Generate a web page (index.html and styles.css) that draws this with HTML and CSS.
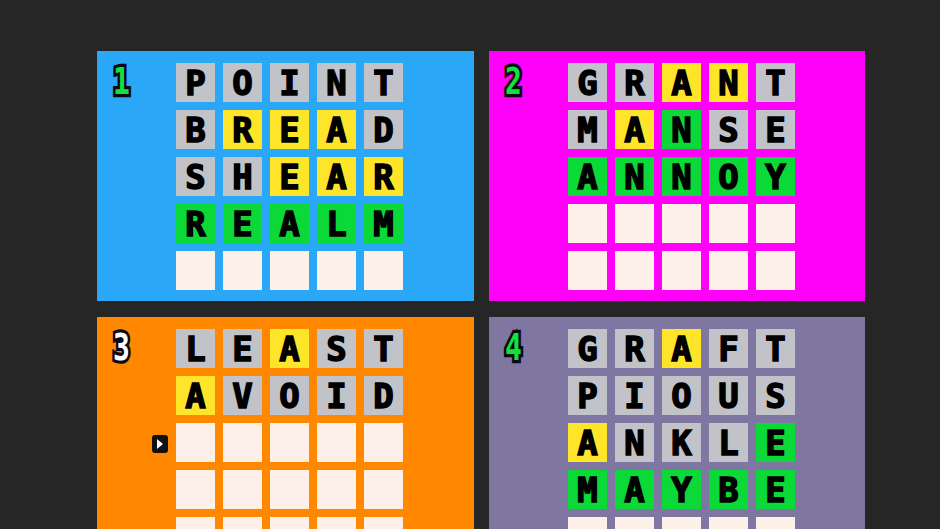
FILE: index.html
```html
<!DOCTYPE html>
<html>
<head>
<meta charset="utf-8">
<link rel="stylesheet" href="styles.css">
</head>
<body>
<div class="board">
  <div class="panel blue">
    <div class="row"><div class="mark"><span class="num">1</span></div><div class="t g">P</div><div class="t g">O</div><div class="t g">I</div><div class="t g">N</div><div class="t g">T</div></div>
    <div class="row"><div class="mark"></div><div class="t g">B</div><div class="t y">R</div><div class="t y">E</div><div class="t y">A</div><div class="t g">D</div></div>
    <div class="row"><div class="mark"></div><div class="t g">S</div><div class="t g">H</div><div class="t y">E</div><div class="t y">A</div><div class="t y">R</div></div>
    <div class="row"><div class="mark"></div><div class="t k">R</div><div class="t k">E</div><div class="t k">A</div><div class="t k">L</div><div class="t k">M</div></div>
    <div class="row"><div class="mark"></div><div class="t e"></div><div class="t e"></div><div class="t e"></div><div class="t e"></div><div class="t e"></div></div>
  </div>
  <div class="panel magenta">
    <div class="row"><div class="mark"><span class="num">2</span></div><div class="t g">G</div><div class="t g">R</div><div class="t y">A</div><div class="t y">N</div><div class="t g">T</div></div>
    <div class="row"><div class="mark"></div><div class="t g">M</div><div class="t y">A</div><div class="t k">N</div><div class="t g">S</div><div class="t g">E</div></div>
    <div class="row"><div class="mark"></div><div class="t k">A</div><div class="t k">N</div><div class="t k">N</div><div class="t k">O</div><div class="t k">Y</div></div>
    <div class="row"><div class="mark"></div><div class="t e"></div><div class="t e"></div><div class="t e"></div><div class="t e"></div><div class="t e"></div></div>
    <div class="row"><div class="mark"></div><div class="t e"></div><div class="t e"></div><div class="t e"></div><div class="t e"></div><div class="t e"></div></div>
  </div>
  <div class="panel orange">
    <div class="row"><div class="mark"><span class="num active">3</span></div><div class="t g">L</div><div class="t g">E</div><div class="t y">A</div><div class="t g">S</div><div class="t g">T</div></div>
    <div class="row"><div class="mark"></div><div class="t y">A</div><div class="t g">V</div><div class="t g">O</div><div class="t g">I</div><div class="t g">D</div></div>
    <div class="row"><div class="mark cur"><svg class="cursor" width="16" height="18" viewBox="0 0 16 18"><rect x="0" y="0" width="16" height="18" rx="3" fill="#111"/><path d="M5 4 L11 9 L5 14 Z" fill="#fff"/></svg></div><div class="t e"></div><div class="t e"></div><div class="t e"></div><div class="t e"></div><div class="t e"></div></div>
    <div class="row"><div class="mark"></div><div class="t e"></div><div class="t e"></div><div class="t e"></div><div class="t e"></div><div class="t e"></div></div>
    <div class="row"><div class="mark"></div><div class="t e"></div><div class="t e"></div><div class="t e"></div><div class="t e"></div><div class="t e"></div></div>
  </div>
  <div class="panel purple">
    <div class="row"><div class="mark"><span class="num">4</span></div><div class="t g">G</div><div class="t g">R</div><div class="t y">A</div><div class="t g">F</div><div class="t g">T</div></div>
    <div class="row"><div class="mark"></div><div class="t g">P</div><div class="t g">I</div><div class="t g">O</div><div class="t g">U</div><div class="t g">S</div></div>
    <div class="row"><div class="mark"></div><div class="t y">A</div><div class="t g">N</div><div class="t g">K</div><div class="t g">L</div><div class="t k">E</div></div>
    <div class="row"><div class="mark"></div><div class="t k">M</div><div class="t k">A</div><div class="t k">Y</div><div class="t k">B</div><div class="t k">E</div></div>
    <div class="row"><div class="mark"></div><div class="t e"></div><div class="t e"></div><div class="t e"></div><div class="t e"></div><div class="t e"></div></div>
  </div>
</div>
</body>
</html>
```
FILE: styles.css
```css
html, body {
  margin: 0;
  padding: 0;
  background: #262626;
  overflow: hidden;
  width: 940px;
  height: 529px;
}
.board {
  display: grid;
  grid-template-columns: 377px 376px;
  column-gap: 15px;
  row-gap: 16px;
  padding: 51px 0 0 97px;
}
.panel {
  height: 250px;
  box-sizing: border-box;
  padding-top: 12px;
  display: flex;
  flex-direction: column;
  gap: 8px;
}
.blue { background: #2ba7f7; }
.magenta { background: #ff00f8; }
.orange { background: #ff8800; }
.purple { background: #7f76a1; }
.row {
  display: flex;
  gap: 8px;
  height: 39px;
}
.mark {
  width: 71px;
  flex: none;
  display: flex;
  align-items: center;
  padding-left: 16px;
  box-sizing: border-box;
}
.mark.cur {
  justify-content: flex-end;
}
.cursor {
  display: block;
  margin-top: 2px;
}
.num {
  font-family: "DejaVu Sans Mono", monospace;
  font-weight: bold;
  font-size: 28px;
  line-height: 30px;
  color: #14e23c;
  -webkit-text-stroke: 5px #0a0a14;
  paint-order: stroke fill;
  display: inline-block;
  transform: scaleY(1.3);
  margin-top: -2px;
}
.num.active {
  color: #ffffff;
}
.t {
  width: 39px;
  height: 39px;
  flex: none;
  display: flex;
  align-items: center;
  justify-content: center;
  font-family: "DejaVu Sans Mono", monospace;
  font-weight: bold;
  font-size: 34px;
  color: #000;
  -webkit-text-stroke: 1.5px #000;
  line-height: 1;
  padding-top: 1px;
  box-sizing: border-box;
}
.t.g { background: #c2c3c8; }
.t.y { background: #ffe52a; }
.t.k { background: #0bd937; }
.t.e { background: #fdf0e8; }
```
